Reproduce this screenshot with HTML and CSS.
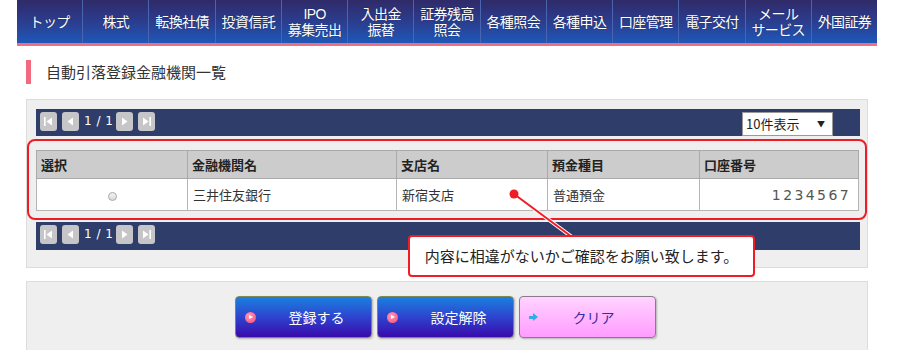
FILE: index.html
```html
<!DOCTYPE html>
<html lang="ja">
<head>
    <meta charset="UTF-8">
    <title>自動引落登録金融機関一覧</title>
    <link rel="stylesheet" href="styles.css">
</head>
<body>
<div class="page">
    <nav class="gnav">
        <a>トップ</a>
        <a>株式</a>
        <a>転換社債</a>
        <a>投資信託</a>
        <a>IPO<br>募集売出</a>
        <a>入出金<br>振替</a>
        <a>証券残高<br>照会</a>
        <a>各種照会</a>
        <a>各種申込</a>
        <a>口座管理</a>
        <a>電子交付</a>
        <a>メール<br>サービス</a>
        <a>外国証券</a>
    </nav>
    <div class="gnav-line"></div>

    <h2 class="title">自動引落登録金融機関一覧</h2>

    <div class="panel">
        <div class="pager">
            <div class="pager-nav">
                <span class="pbtn"><svg width="11" height="11" viewBox="0 0 11 11"><rect x="1" y="1" width="1.6" height="9" fill="#fff"/><path d="M9 1.5 L3.5 5.5 L9 9.5 Z" fill="#fff"/></svg></span>
                <span class="pbtn"><svg width="11" height="11" viewBox="0 0 11 11"><path d="M8 1.5 L2.5 5.5 L8 9.5 Z" fill="#fff"/></svg></span>
                <span class="pcount">1 / 1</span>
                <span class="pbtn"><svg width="11" height="11" viewBox="0 0 11 11"><path d="M3 1.5 L8.5 5.5 L3 9.5 Z" fill="#fff"/></svg></span>
                <span class="pbtn"><svg width="11" height="11" viewBox="0 0 11 11"><path d="M2 1.5 L7.5 5.5 L2 9.5 Z" fill="#fff"/><rect x="8.4" y="1" width="1.6" height="9" fill="#fff"/></svg></span>
            </div>
            <div class="count-select">10件表示<span class="arrow">▼</span></div>
        </div>

        <table class="list">
            <tr>
                <th class="c1">選択</th>
                <th class="c2">金融機関名</th>
                <th class="c3">支店名</th>
                <th class="c4">預金種目</th>
                <th class="c5">口座番号</th>
            </tr>
            <tr>
                <td class="radio-cell"><span class="radio"></span></td>
                <td>三井住友銀行</td>
                <td>新宿支店</td>
                <td>普通預金</td>
                <td class="num">1234567</td>
            </tr>
        </table>

        <div class="pager pager-bottom">
            <div class="pager-nav">
                <span class="pbtn"><svg width="11" height="11" viewBox="0 0 11 11"><rect x="1" y="1" width="1.6" height="9" fill="#fff"/><path d="M9 1.5 L3.5 5.5 L9 9.5 Z" fill="#fff"/></svg></span>
                <span class="pbtn"><svg width="11" height="11" viewBox="0 0 11 11"><path d="M8 1.5 L2.5 5.5 L8 9.5 Z" fill="#fff"/></svg></span>
                <span class="pcount">1 / 1</span>
                <span class="pbtn"><svg width="11" height="11" viewBox="0 0 11 11"><path d="M3 1.5 L8.5 5.5 L3 9.5 Z" fill="#fff"/></svg></span>
                <span class="pbtn"><svg width="11" height="11" viewBox="0 0 11 11"><path d="M2 1.5 L7.5 5.5 L2 9.5 Z" fill="#fff"/><rect x="8.4" y="1" width="1.6" height="9" fill="#fff"/></svg></span>
            </div>
        </div>
    </div>

    <div class="panel actions">
        <button class="btn btn-blue"><span class="ico-play"></span><span class="label">登録する</span></button>
        <button class="btn btn-blue"><span class="ico-play"></span><span class="label">設定解除</span></button>
        <button class="btn btn-pink"><span class="ico-arrow"></span><span class="label">クリア</span></button>
    </div>

    <!-- 注記 (赤枠と吹き出し) -->
    <div class="mark-box"></div>
    <svg class="mark-line" width="900" height="350">
        <line x1="514" y1="194" x2="572" y2="237" stroke="#fff" stroke-width="4"/>
        <line x1="514" y1="194" x2="572" y2="237" stroke="#ee1c25" stroke-width="2"/>
        <circle cx="514" cy="194" r="4.5" fill="#ee1c25"/>
    </svg>
    <div class="callout">内容に相違がないかご確認をお願い致します。</div>
</div>
</body>
</html>
```

FILE: styles.css
```css
body {
    margin: 0;
    font-family: "Noto Sans CJK JP", "Noto Sans", sans-serif;
    color: #333;
    background: #fff;
}
.page {
    position: relative;
    width: 900px;
    height: 350px;
    overflow: hidden;
}
.gnav {
    display: flex;
    margin-left: 17px;
    width: 860px;
    height: 43px;
    background: linear-gradient(#302a68, #2a3f92 55%, #1f58b8);
}
.gnav a {
    flex: 1;
    display: flex;
    align-items: center;
    justify-content: center;
    text-align: center;
    color: #fff;
    font-family: "Liberation Sans", "Noto Sans CJK JP", sans-serif;
    font-size: 14px;
    line-height: 16px;
    letter-spacing: -0.6px;
    white-space: nowrap;
    border-left: 1px solid #4a64b0;
    text-shadow: 0 0 1px rgba(0, 0, 0, 0.5);
}
.gnav a:first-child {
    border-left: none;
}
.gnav-line {
    margin-left: 17px;
    width: 860px;
    height: 3px;
    background: #ef6f82;
}
.title {
    margin: 14px 0 0 26px;
    padding-left: 15px;
    border-left: 5px solid #f36a80;
    height: 24px;
    line-height: 24px;
    font-size: 15px;
    font-weight: normal;
    color: #333;
}
.panel {
    margin: 15px 32px 0 26px;
    padding: 9px 7px 17px 9px;
    background: #efefef;
    border: 1px solid #dcdcdc;
}
.pager {
    display: flex;
    justify-content: space-between;
    align-items: flex-start;
    height: 27px;
    background: #2e3d69;
    padding: 0 27px 0 4px;
}
.pager-nav {
    display: flex;
    align-items: center;
    height: 24px;
}
.pbtn {
    display: flex;
    align-items: center;
    justify-content: center;
    width: 17px;
    height: 19px;
    margin-right: 5px;
    background: #c6c6c8;
    border-radius: 3px;
}
.pcount {
    color: #fff;
    font-family: "DejaVu Sans", sans-serif;
    font-size: 12px;
    margin: 0 3px 0 0;
    letter-spacing: 0.5px;
}
.count-select {
    margin-top: 3px;
    width: 86px;
    height: 22px;
    padding-left: 3px;
    background: #fff;
    border: 1px solid #999;
    font-size: 13px;
    line-height: 22px;
    color: #222;
    position: relative;
}
.count-select .arrow {
    position: absolute;
    right: 7px;
    top: 0;
    font-size: 8px;
}
.list {
    margin-top: 14px;
    width: 823px;
    border-collapse: collapse;
    border: 1px solid #a9a9a9;
    font-size: 13px;
}
.list th {
    height: 27px;
    padding: 0 4px;
    background: #cccccc;
    text-align: left;
    font-weight: bold;
    color: #222;
    border: 1px solid #a9a9a9;
}
.list td {
    height: 31px;
    padding: 0 5px;
    background: #fff;
    color: #333;
    border: 1px solid #b5b5b5;
}
.c1 { width: 142px; }
.c2 { width: 200px; }
.c3 { width: 142px; }
.c4 { width: 143px; }
.radio-cell {
    text-align: center;
}
.radio {
    display: inline-block;
    width: 7px;
    height: 7px;
    border-radius: 50%;
    border: 1px solid #aaa;
    background: linear-gradient(#f5f5f5, #d8d8d8);
    vertical-align: middle;
}
.list td.num {
    text-align: right;
    padding-right: 7px;
    font-family: "DejaVu Sans", sans-serif;
    font-size: 14px;
    color: #555;
    letter-spacing: 2.4px;
}
.pager-bottom {
    margin-top: 11px;
    height: 28px;
}
.actions {
    margin-top: 13px;
    height: 80px;
    padding: 14px 0 0 208px;
    display: flex;
    align-items: flex-start;
    gap: 5px;
}
.btn {
    display: flex;
    align-items: center;
    width: 137px;
    height: 42px;
    padding: 0 0 0 9px;
    border-radius: 4px;
    font-family: "Noto Sans CJK JP", sans-serif;
    font-size: 14px;
    box-shadow: 1px 1px 2px rgba(0, 0, 0, 0.25);
}
.btn .label {
    flex: 1;
    text-align: center;
}
.btn-blue {
    color: #fff;
    border: 1px solid #7d8a55;
    background: linear-gradient(#1b80df, #2d44cf 50%, #3a0aac);
}
.btn-blue .label {
    padding-left: 6px;
}
.btn-pink {
    color: #3a2aa0;
    border: 1px solid #8a7a8a;
    background: linear-gradient(#ffd4ff, #ff9cff);
}
.btn-pink .label {
    padding-right: 6px;
}
.ico-play {
    position: relative;
    width: 11px;
    height: 11px;
    border-radius: 50%;
    background: radial-gradient(circle at 40% 35%, #ff9ab5, #f04a7c);
}
.ico-play::after {
    content: "";
    position: absolute;
    left: 4px;
    top: 3px;
    border-left: 4px solid #fff;
    border-top: 2.5px solid transparent;
    border-bottom: 2.5px solid transparent;
}
.ico-arrow {
    position: relative;
    width: 9px;
    height: 9px;
}
.ico-arrow::before {
    content: "";
    position: absolute;
    left: 0;
    top: 3px;
    width: 5px;
    height: 3px;
    background: #2ab0e8;
}
.ico-arrow::after {
    content: "";
    position: absolute;
    left: 4px;
    top: 0;
    border-left: 5px solid #2ab0e8;
    border-top: 4.5px solid transparent;
    border-bottom: 4.5px solid transparent;
}
.mark-box {
    position: absolute;
    left: 27px;
    top: 139px;
    width: 836px;
    height: 77px;
    border: 2px solid #ee1c25;
    border-radius: 8px;
    pointer-events: none;
}
.mark-line {
    position: absolute;
    left: 0;
    top: 0;
    pointer-events: none;
}
.callout {
    position: absolute;
    left: 408px;
    top: 235px;
    width: 343px;
    height: 38px;
    border: 2px solid #ee1c25;
    border-radius: 4px;
    background: #fff;
    color: #222;
    font-size: 15px;
    line-height: 38px;
    text-align: center;
}
```
